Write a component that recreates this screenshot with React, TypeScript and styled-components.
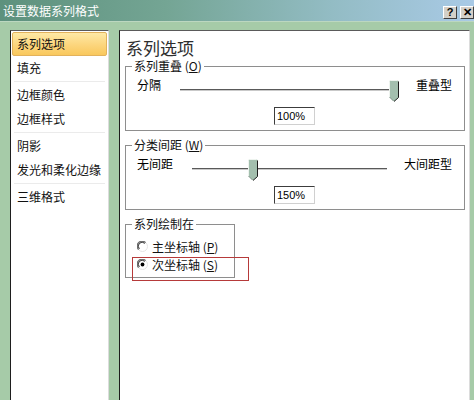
import React from "react";
import styled, { createGlobalStyle } from "styled-components";

const GlobalStyle = createGlobalStyle`
    html, body {
        margin: 0;
        padding: 0;
    }
    body {
        font-family: "Noto Sans CJK SC", "Liberation Sans", sans-serif;
        font-size: 12px;
        color: #000;
        background: #a6cba8;
    }
`;

const navItems = [
    ["系列选项"],
    ["填充"],
    ["边框颜色", "边框样式"],
    ["阴影", "发光和柔化边缘"],
    ["三维格式"],
];

function Thumb({ pos }: { pos: number }) {
    return (
        <ThumbBox $pos={pos}>
            <svg width="10" height="22" viewBox="0 0 10 22">
                <path d="M0.5 1.5 Q0.5 0.5 1.5 0.5 L8.5 0.5 Q9.5 0.5 9.5 1.5 L9.5 17.5 L5 21.5 L0.5 17 Z" fill="#a3bfae" />
                <polyline points="0.5,17 0.5,1.5 1.5,0.5 8.5,0.5" fill="none" stroke="#eef4ef" strokeWidth="1" />
                <polyline points="9.5,1.5 9.5,17.5 5,21.5" fill="none" stroke="#1e1e1e" strokeWidth="1" />
                <polyline points="0.5,17 4.5,21" fill="none" stroke="#7d8f84" strokeWidth="1" />
            </svg>
        </ThumbBox>
    );
}

function Radio({ checked }: { checked?: boolean }) {
    return (
        <svg width="11" height="11" viewBox="0 0 11 11">
            <circle cx="5.5" cy="5.5" r="5" fill="#fff" stroke="#e4e4e4" />
            <path d="M1.6 8.6 A4.6 4.6 0 0 1 8.6 1.6" fill="none" stroke="#6c6c6c" strokeWidth="1.2" />
            <path d="M2.4 7.8 A3.6 3.6 0 0 1 7.8 2.4" fill="none" stroke="#2a2a2a" strokeWidth="1" />
            {checked && <circle cx="5.5" cy="5.5" r="1.9" fill="#000" />}
        </svg>
    );
}

function SliderGroup(props: {
    legend: string;
    hotkey: string;
    left: string;
    right: string;
    pos: number;
    value: string;
    first?: boolean;
}) {
    return (
        <Group $first={props.first}>
            <GroupLegend>
                {props.legend} (<u>{props.hotkey}</u>)
            </GroupLegend>
            <SliderRow>
                <SideLabel>{props.left}</SideLabel>
                <Slider>
                    <Track />
                    <Thumb pos={props.pos} />
                </Slider>
                <SideLabel>{props.right}</SideLabel>
            </SliderRow>
            <ValueBox>{props.value}</ValueBox>
        </Group>
    );
}

export default function App() {
    return (
        <>
            <GlobalStyle />
            <Window>
                <TitleBar>
                    <Title>设置数据系列格式</Title>
                    <Caps>
                        <CapButton>?</CapButton>
                        <CapButton>✕</CapButton>
                    </Caps>
                </TitleBar>
                <Body>
                    <NavPanel>
                        {navItems.map((group, gi) => (
                            <React.Fragment key={gi}>
                                {gi > 1 && <NavDivider />}
                                {group.map((label) => (
                                    <NavItem key={label} $selected={label === "系列选项"}>
                                        {label}
                                    </NavItem>
                                ))}
                            </React.Fragment>
                        ))}
                    </NavPanel>
                    <OptionsPanel>
                        <Heading>系列选项</Heading>
                        <SliderGroup
                            first
                            legend="系列重叠"
                            hotkey="O"
                            left="分隔"
                            right="重叠型"
                            pos={1}
                            value="100%"
                        />
                        <SliderGroup
                            legend="分类间距"
                            hotkey="W"
                            left="无间距"
                            right="大间距型"
                            pos={0.3}
                            value="150%"
                        />
                        <AxisGroup>
                            <GroupLegend>系列绘制在</GroupLegend>
                            <RadioRow>
                                <Radio />
                                <span>
                                    主坐标轴 (<u>P</u>)
                                </span>
                            </RadioRow>
                            <RadioRow>
                                <Radio checked />
                                <span>
                                    次坐标轴 (<u>S</u>)
                                </span>
                                <Marker />
                            </RadioRow>
                        </AxisGroup>
                    </OptionsPanel>
                </Body>
            </Window>
        </>
    );
}

const Window = styled.div`
    width: 474px;
    height: 400px;
    overflow: hidden;
    display: flex;
    flex-direction: column;
    background: #a6cba8;
`;

const TitleBar = styled.div`
    height: 22px;
    flex: none;
    display: flex;
    align-items: center;
    justify-content: space-between;
    padding-left: 3px;
    background: linear-gradient(to right, #5d917d 0%, #74a594 35%, #93bcc4 70%, #a9cae6 100%);
    box-shadow: inset 0 -1px 0 #bcd7c0;
`;

const Title = styled.span`
    color: #fff;
    font-size: 12px;
    line-height: 14px;
`;

const Caps = styled.div`
    display: flex;
    gap: 3px;
    align-self: flex-start;
    margin-top: 6px;
`;

const CapButton = styled.div`
    width: 14px;
    height: 13px;
    box-sizing: border-box;
    background: #d4d0c8;
    border: 1px solid;
    border-color: #fff #404040 #404040 #fff;
    font: bold 11px/11px "Liberation Sans", sans-serif;
    color: #000;
    display: flex;
    align-items: center;
    justify-content: center;
`;

const Body = styled.div`
    flex: 1;
    display: flex;
    gap: 10px;
    padding: 8px 4px 0 10px;
    min-height: 0;
`;

const NavPanel = styled.div`
    width: 99px;
    box-sizing: border-box;
    background: #fff;
    border-top: 1px solid #5a5a5a;
    border-left: 1px solid #1e1e1e;
    border-right: 1px solid #dcdcdc;
    padding: 1px;
`;

const NavItem = styled.div<{ $selected?: boolean }>`
    height: 24px;
    box-sizing: border-box;
    line-height: ${(p) => (p.$selected ? "22px" : "24px")};
    padding: 0 ${(p) => (p.$selected ? "4px" : "5px")};
    font-size: 12px;
    white-space: nowrap;
    color: #111;
    border-radius: 2px;
    ${(p) =>
        p.$selected &&
        `
        background: linear-gradient(to bottom, #fee9a6 0%, #fcd57c 55%, #f9c85d 100%);
        border: 1px solid #e2b25c;
    `}
`;

const NavDivider = styled.div`
    height: 1px;
    margin: 1px 2px;
    background: #ebebeb;
`;

const OptionsPanel = styled.div`
    flex: 1;
    background: #fff;
    border-top: 1px solid #5a5a5a;
    border-left: 1px solid #1e1e1e;
    border-right: 1px solid #dcdcdc;
    padding: 0 4px 0 5px;
`;

const Heading = styled.div`
    margin: 8px 0 0 1px;
    font-size: 17px;
    line-height: 17px;
    color: #2e2e2e;
`;

const Group = styled.fieldset<{ $first?: boolean }>`
    margin: ${(p) => (p.$first ? "3px" : "7px")} 0 0;
    min-width: 0;
    border: 1px solid #8e8e8e;
    padding: 5px 12px 5px 11px;
`;

const GroupLegend = styled.legend`
    margin-left: -5px;
    padding: 0 2px;
    font-size: 12px;
    line-height: 14px;
    color: #111;

    u {
        text-underline-offset: 1px;
    }
`;

const SliderRow = styled.div`
    display: flex;
    align-items: flex-start;
`;

const SideLabel = styled.span`
    line-height: 14px;
    white-space: nowrap;
`;

const Slider = styled.div`
    flex: 1;
    position: relative;
    height: 24px;
    margin: 0 17px 0 19px;
`;

const Track = styled.div`
    margin-top: 11px;
    height: 1px;
    background: #595959;
    border-bottom: 1px solid #c9c9c9;
`;

const ThumbBox = styled.div<{ $pos: number }>`
    position: absolute;
    top: 2px;
    left: calc(${(p) => p.$pos} * (100% - 10px));
    width: 10px;
    height: 22px;

    svg {
        display: block;
    }
`;

const ValueBox = styled.div`
    margin: 5px auto 0;
    width: 41px;
    height: 18px;
    box-sizing: border-box;
    border: 1px solid;
    border-color: #3c3c3c #d0d0d0 #d0d0d0 #3c3c3c;
    padding-left: 2px;
    font: 11px/16px "Liberation Sans", sans-serif;
    color: #000;
    background: #fff;
`;

const AxisGroup = styled.fieldset`
    margin: 7px 0 0;
    width: 110px;
    box-sizing: border-box;
    min-width: 0;
    border: 1px solid #8e8e8e;
    padding: 6px 4px 4px 11px;
`;

const RadioRow = styled.div`
    position: relative;
    height: 18px;
    display: flex;
    align-items: center;
    gap: 4px;
    white-space: nowrap;
    color: #111;

    svg {
        flex: none;
    }
`;

const Marker = styled.div`
    position: absolute;
    left: -5px;
    top: 2px;
    width: 117px;
    height: 24px;
    box-sizing: border-box;
    border: 1px solid #b63a3a;
    pointer-events: none;
`;
